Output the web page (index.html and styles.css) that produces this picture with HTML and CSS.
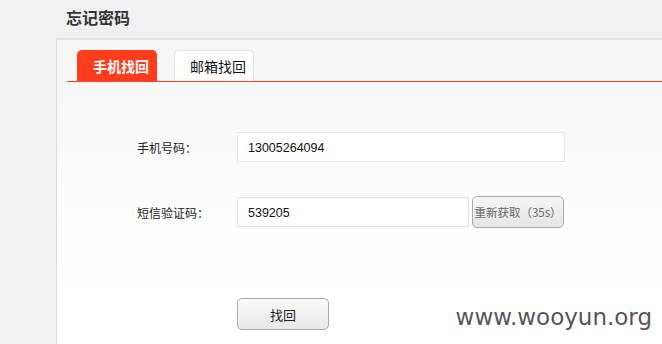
FILE: index.html
```html
<!DOCTYPE html>
<html>
<head>
  <meta charset="UTF-8">
  <title>忘记密码</title>
  <link rel="stylesheet" href="styles.css">
</head>
<body>
  <h1 class="page-title">忘记密码</h1>

  <div class="panel">
    <div class="tab-bar">
      <div class="tab active">手机找回</div>
      <div class="tab">邮箱找回</div>
    </div>

    <div class="form">
      <div class="form-row">
        <label class="form-label">手机号码：</label>
        <input class="form-input wide" type="text" value="13005264094">
      </div>
      <div class="form-row">
        <label class="form-label">短信验证码：</label>
        <input class="form-input short" type="text" value="539205">
        <button class="code-btn">重新获取（35s）</button>
      </div>
      <div class="form-actions">
        <button class="submit-btn">找回</button>
      </div>
    </div>
  </div>

  <div class="watermark">www.wooyun.org</div>
</body>
</html>
```

FILE: styles.css
```css
* {
  margin: 0;
  padding: 0;
  box-sizing: border-box;
}

body {
  font-family: "Noto Sans CJK SC", "DejaVu Sans", sans-serif;
  font-size: 13px;
  color: #222;
  background: #f0f0f0;
  height: 344px;
  overflow: hidden;
  position: relative;
}

.page-title {
  font-size: 16px;
  font-weight: bold;
  color: #333;
  line-height: 20px;
  padding: 7px 0 0 66px;
  height: 38px;
}

.panel {
  margin-left: 56px;
  height: 306px;
  border-top: 2px solid #e2e2e2;
  border-left: 1px solid #dcdcdc;
  padding-left: 10px;
  background: linear-gradient(#f5f5f5, #fdfdfd 190px, #fff 260px);
}

/* Tabs */
.tab-bar {
  display: flex;
  gap: 17px;
  margin-top: 10px;
  padding-left: 10px;
  height: 32px;
  border-bottom: 1px solid #ff3d1d;
}

.tab {
  width: 80px;
  height: 31px;
  line-height: 31px;
  padding-left: 8px;
  text-align: center;
  border: 1px solid #e4e4e4;
  border-bottom: none;
  border-radius: 5px 5px 0 0;
  background: #fff;
  color: #111;
  font-size: 14px;
}

.tab.active {
  background: #ff3d1d;
  border-color: #ff3d1d;
  color: #fff;
  font-weight: bold;
}

/* Form */
.form {
  padding: 50px 0 0 70px;
}

.form-row {
  display: flex;
  align-items: center;
  height: 30px;
  margin-bottom: 35px;
}

.form-label {
  width: 100px;
  font-size: 12px;
  color: #222;
}

.form-input {
  height: 30px;
  border: 1px solid #e6e6e6;
  background: #fff;
  padding: 2px 10px 0;
  font-family: "Liberation Sans", sans-serif;
  font-size: 12.5px;
  color: #111;
  outline: none;
}

.form-input.wide {
  width: 328px;
}

.form-input.short {
  width: 232px;
}

.code-btn {
  margin-left: 3px;
  width: 92px;
  height: 32px;
  padding: 0;
  text-align: center;
  border: 1px solid #aaa;
  border-radius: 5px;
  background: linear-gradient(#f6f6f6, #e4e4e4);
  color: #666;
  font-family: "Noto Sans CJK SC", sans-serif;
  font-size: 11.5px;
  white-space: nowrap;
}

.form-actions {
  padding: 36px 0 0 100px;
}

.submit-btn {
  width: 92px;
  height: 32px;
  border: 1px solid #a8a8a8;
  border-radius: 5px;
  background: linear-gradient(#fafafa, #e8e8e8);
  color: #222;
  font-family: "Noto Sans CJK SC", sans-serif;
  font-size: 13px;
}

.watermark {
  position: absolute;
  right: 10px;
  bottom: 14px;
  font-family: "DejaVu Sans", sans-serif;
  font-size: 23px;
  color: #555;
}
```
